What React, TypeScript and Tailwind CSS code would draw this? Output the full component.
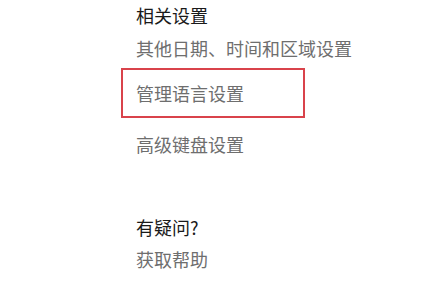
export default function App() {
  return (
    <div
      className="w-[422px] h-[281px] bg-white overflow-hidden pl-[136px] text-[18px]"
      style={{ fontFamily: '"Noto Sans CJK SC", "Noto Sans", sans-serif' }}
    >
      <div className="h-[31px] leading-[31px] text-[#1a1a1a]">相关设置</div>
      <div className="h-[34px] leading-[34px] text-[#6e6e6e]">其他日期、时间和区域设置</div>
      {/* highlighted row */}
      <div className="mt-[3px] ml-[-15px] w-[184px] h-[50px] border-2 border-[#d9434b] pl-[13px] pt-[1px] leading-[44px] text-[#6e6e6e]">
        管理语言设置
      </div>
      <div className="mt-[9px] h-[34px] leading-[34px] text-[#6e6e6e]">高级键盘设置</div>
      <div className="mt-[50px] h-[32px] leading-[32px] text-[#1a1a1a]">有疑问?</div>
      <div className="h-[32px] leading-[32px] text-[#6e6e6e]">获取帮助</div>
    </div>
  );
}
